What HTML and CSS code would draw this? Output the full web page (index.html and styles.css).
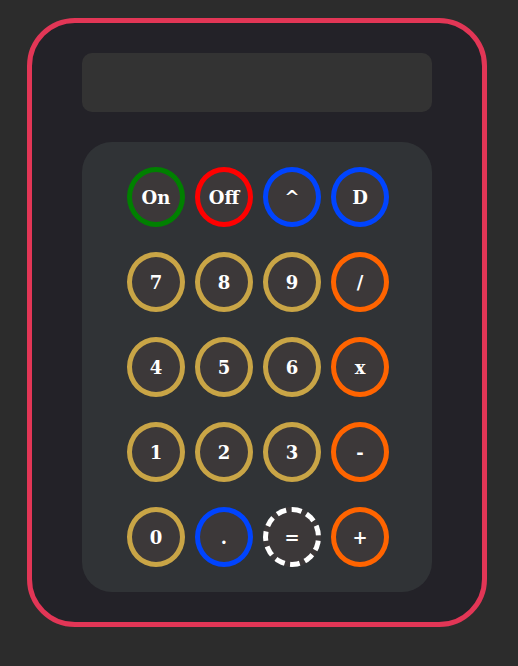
FILE: index.html
```html
<!DOCTYPE html>
<html>
<head>
<meta charset="utf-8">
<link rel="stylesheet" href="styles.css">
</head>
<body>
<div class="calc">
  <div class="display"></div>
  <div class="keypad">
    <button class="key green">On</button>
    <button class="key red">Off</button>
    <button class="key blue">^</button>
    <button class="key blue">D</button>
    <button class="key gold">7</button>
    <button class="key gold">8</button>
    <button class="key gold">9</button>
    <button class="key orange">/</button>
    <button class="key gold">4</button>
    <button class="key gold">5</button>
    <button class="key gold">6</button>
    <button class="key orange">x</button>
    <button class="key gold">1</button>
    <button class="key gold">2</button>
    <button class="key gold">3</button>
    <button class="key orange">-</button>
    <button class="key gold">0</button>
    <button class="key blue">.</button>
    <button class="key white">=</button>
    <button class="key orange">+</button>
  </div>
</div>
</body>
</html>
```
FILE: styles.css
```css
html, body {
  margin: 0;
  padding: 0;
  background: #2c2c2c;
}
body {
  padding: 18px 0 0 27px;
  height: 666px;
  box-sizing: border-box;
}
.calc {
  width: 460px;
  height: 609px;
  box-sizing: border-box;
  border: 5px solid #e23656;
  border-radius: 48px;
  background: #232228;
  padding: 30px 50px;
  display: flex;
  flex-direction: column;
  gap: 30px;
}
.display {
  height: 60px;
  background: #333333;
  border-radius: 10px;
}
.keypad {
  height: 450px;
  box-sizing: border-box;
  background: #303336;
  border-radius: 30px;
  padding: 25px 45px;
  display: grid;
  grid-template-columns: repeat(4, 58px);
  grid-auto-rows: 60px;
  column-gap: 10px;
  row-gap: 25px;
}
.key {
  width: 58px;
  height: 60px;
  box-sizing: border-box;
  border: 5px solid;
  border-radius: 50%;
  background: #3c3839;
  color: #ffffff;
  font-family: "DejaVu Serif", serif;
  font-weight: bold;
  font-size: 18px;
  padding: 0;
  display: flex;
  align-items: center;
  justify-content: center;
}
.green { border-color: #008000; }
.red { border-color: #ff0000; }
.blue { border-color: #0044ff; }
.gold { border-color: #c9a546; }
.orange { border-color: #ff6400; }
.white { border-color: #ffffff; border-style: dashed; }
```
